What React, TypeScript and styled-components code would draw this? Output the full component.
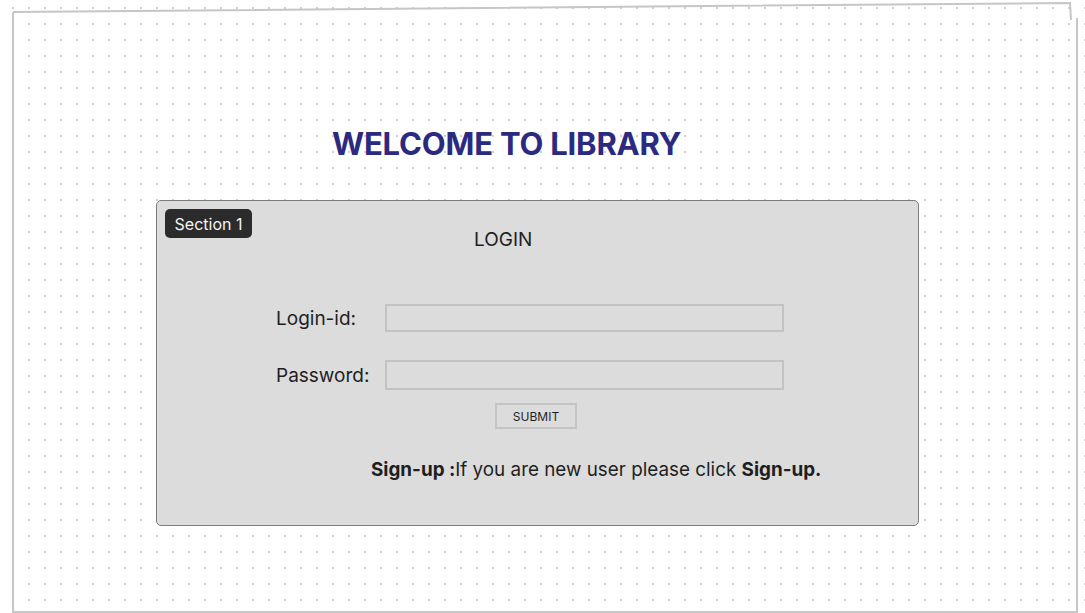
import React from "react";
import styled, { createGlobalStyle } from "styled-components";

const Global = createGlobalStyle`
  html, body { margin: 0; padding: 0; background: #ffffff; }
  body { font-family: Inter, "Noto Sans", sans-serif; }
`;

const Page = styled.div`
  position: relative;
  width: 1085px;
  height: 613px;
  overflow: hidden;
  background-color: #ffffff;
  background-image: radial-gradient(circle at 1px 1px, #cfcfcf 0.9px, transparent 1.3px);
  background-size: 16px 16px;
  background-position: 28px 23px;
  display: flex;
  flex-direction: column;
`;

const Frame = styled.svg`
  position: absolute;
  left: 0;
  top: 0;
  pointer-events: none;
`;

const Title = styled.h1`
  margin: 128px 0 0 332px;
  font-family: Inter, sans-serif;
  font-weight: 700;
  font-size: 31px;
  line-height: 32px;
  letter-spacing: -0.2px;
  color: #2c2a80;
`;

const Panel = styled.section`
  margin: 40px 0 0 156px;
  width: 763px;
  height: 326px;
  box-sizing: border-box;
  background: #dcdcdc;
  border: 1px solid #7d7d7d;
  border-radius: 5px;
  padding: 8px 0 0 8px;
  display: flex;
  flex-direction: column;
`;

const Header = styled.div`
  display: flex;
  align-items: flex-start;
`;

const Badge = styled.span`
  display: inline-flex;
  align-items: center;
  justify-content: center;
  width: 87px;
  height: 29px;
  box-sizing: border-box;
  background: #2b2b2b;
  color: #f4f4f4;
  border-radius: 5px;
  font-size: 16px;
  font-family: Inter, sans-serif;
`;

const Heading = styled.h2`
  margin: 20px 0 0 222px;
  font-weight: 400;
  font-size: 19px;
  line-height: 22px;
  color: #1f1f1f;
`;

const Form = styled.div`
  display: grid;
  grid-template-columns: 109px 399px;
  row-gap: 28px;
  align-items: center;
  margin: 53px 0 0 111px;
`;

const Label = styled.label`
  font-size: 19px;
  line-height: 23px;
  color: #1f1f1f;
`;

const Field = styled.div<{ $h: number }>`
  height: ${(p) => p.$h}px;
  box-sizing: border-box;
  border: 2px solid #c2c2c2;
  background: #dcdcdc;
`;

const Submit = styled.button`
  margin: 13px 0 0 330px;
  width: 82px;
  height: 26px;
  box-sizing: border-box;
  border: 2px solid #c4c4c4;
  background: #dcdcdc;
  font-family: Inter, sans-serif;
  font-size: 12px;
  color: #1f1f1f;
  padding: 0;
`;

const Note = styled.p`
  margin: 29px 0 0 206px;
  font-size: 18.85px;
  line-height: 23px;
  color: #1f1f1f;
  white-space: nowrap;
  b { font-weight: 700; }
`;

export default function App() {
  return (
    <>
      <Global />
      <Page>
        <Frame width={1085} height={613} viewBox="0 0 1085 613">
          <path d="M13 12 L1070 3 L1071 20" fill="none" stroke="#c6c6c6" strokeWidth={2} />
          <path d="M1077 18 L1077 612 L13 612 L13 12" fill="none" stroke="#c6c6c6" strokeWidth={2} />
        </Frame>
        <Title>WELCOME TO LIBRARY</Title>
        <Panel>
          <Header>
            <Badge>Section 1</Badge>
            <Heading>LOGIN</Heading>
          </Header>
          <Form>
            <Label>Login-id:</Label>
            <Field $h={28} />
            <Label>Password:</Label>
            <Field $h={30} />
          </Form>
          <Submit>SUBMIT</Submit>
          <Note>
            <b>Sign-up :</b>If you are new user please click <b>Sign-up.</b>
          </Note>
        </Panel>
      </Page>
    </>
  );
}
